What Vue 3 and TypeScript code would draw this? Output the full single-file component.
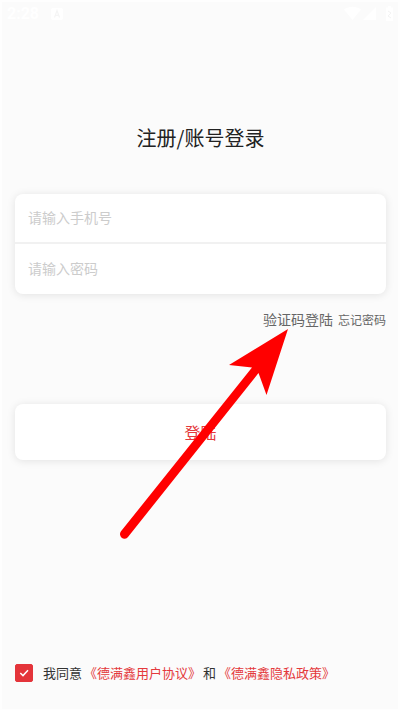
<script setup lang="ts">
import { ref } from 'vue'

const phone = ref<string>('')
const password = ref<string>('')
const agreed = ref<boolean>(true)
</script>

<template>
  <div class="page">
    <header class="status">
      <span class="time">2:28</span>
      <svg class="app-icon" viewBox="0 0 12 12" aria-hidden="true">
        <rect width="12" height="12" rx="2" fill="#fff" />
        <path d="M3.5 9.5 6 2.5l2.500 7M4.400 7.300h3.200" fill="none" stroke="#f5f5f5" stroke-width="1.200" />
      </svg>
      <svg class="signals" viewBox="0 0 50 18" aria-hidden="true">
        <path d="M0 4.500C5 .9 12 .9 17 4.500L8.500 15z" fill="#fff" />
        <path d="M32 2v13H19z" fill="#fff" />
        <path d="M42 2.500h2V1h3v1.500h2V16h-7z" fill="#fff" />
        <path d="M44 6l3 2-3 3 3 2" fill="none" stroke="#f3f3f3" />
      </svg>
    </header>

    <form class="login" @submit.prevent>
      <h1 class="title">注册/账号登录</h1>
      <div class="card fields">
        <input v-model="phone" class="field" type="tel" placeholder="请输入手机号" aria-label="手机号" />
        <input v-model="password" class="field" type="password" placeholder="请输入密码" aria-label="密码" />
      </div>
      <nav class="links">
        <a class="code-link" href="#code">验证码登陆</a>
        <a class="forgot-link" href="#forgot">忘记密码</a>
      </nav>
      <button class="card submit" type="submit">登陆</button>
    </form>

    <footer class="agreement">
      <span class="check-box">
        <input id="agree" v-model="agreed" class="check" type="checkbox" />
        <svg v-if="agreed" class="tick" viewBox="0 0 18 18" aria-hidden="true">
          <path d="M5.300 9 8 11.600 13 6.300" fill="none" stroke="#fff" stroke-width="1.500" />
        </svg>
      </span>
      <label for="agree">我同意</label>
      <a href="#terms">《德满鑫用户协议》</a>
      <span>和</span>
      <a href="#privacy">《德满鑫隐私政策》</a>
    </footer>

    <svg class="arrow" viewBox="0 0 170 220" aria-hidden="true">
      <path
        d="M168 9 109 45l23 2.500L1 211.300a4.500 4.500 0 0 0 7 5.700L138.500 53l8 22z"
        fill="#f00"
      />
    </svg>
  </div>
</template>

<style>
body {
  margin: 0;
  background: #fbfbfb;
}
</style>

<style scoped>
.page {
  position: relative;
  box-sizing: border-box;
  display: flex;
  flex-direction: column;
  min-height: 100vh;
  padding: 0 12px 24px 13px;
  border: 2px solid #fefefe;
  border-bottom-width: 1px;
  background: #fbfbfb;
  color: #333;
  font-family: "Noto Sans CJK SC", sans-serif;
  overflow: hidden;
}

.page::after {
  content: "";
  position: absolute;
  left: -2px;
  bottom: -1px;
  width: 2px;
  height: 2px;
  background: linear-gradient(45deg, #555 50%, transparent 50%);
}

.status {
  display: flex;
  align-items: center;
  height: 24px;
  margin: 0 -8px;
  color: #fff;
}

.time {
  font: 700 16px/24px Roboto, sans-serif;
}

.app-icon {
  width: 12px;
  height: 12px;
  margin-left: 12px;
}

.signals {
  width: 50px;
  height: 18px;
  margin-left: auto;
}

.login {
  display: flex;
  flex-direction: column;
}

.title {
  margin: 96px 0 40px;
  font-size: 20px;
  font-weight: 400;
  line-height: 32px;
  text-align: center;
  color: #222;
}

.card {
  border: 0;
  border-radius: 8px;
  background: #fff;
  box-shadow: 0 1px 8px rgba(0, 0, 0, 0.1);
}

.fields {
  display: flex;
  flex-direction: column;
  overflow: hidden;
}

.field {
  box-sizing: border-box;
  width: 100%;
  height: 50px;
  padding: 0 13px 2px;
  border: 0;
  outline: 0;
  background: transparent;
  color: #333;
  font-family: inherit;
  font-size: 14px;
}

.field:first-child {
  border-bottom: 2px solid #f1f1f1;
}

.field::placeholder {
  color: #ccc;
  opacity: 1;
}

.links {
  display: flex;
  justify-content: flex-end;
  align-items: center;
  gap: 5px;
  height: 24px;
  margin-top: 13px;
}

a {
  text-decoration: none;
}

.code-link {
  color: #666;
  font-size: 14px;
}

.forgot-link {
  color: #666;
  font-size: 12px;
}

.submit {
  height: 56px;
  margin-top: 73px;
  padding: 0;
  color: #e4393c;
  font-family: inherit;
  font-size: 16px;
}

.agreement {
  display: flex;
  align-items: center;
  gap: 2px;
  margin-top: auto;
  font-size: 13px;
  line-height: 24px;
  white-space: nowrap;
}

.agreement a {
  color: #e4393c;
}

.check-box {
  display: grid;
  width: 18px;
  height: 18px;
  margin-right: 8px;
}

.check,
.tick {
  grid-area: 1 / 1;
  width: 18px;
  height: 18px;
}

.check {
  appearance: none;
  margin: 0;
  border: 1px solid #e4343a;
  border-radius: 2px;
  background: #fff;
}

.check:checked {
  background: #e4343a;
}

.tick {
  pointer-events: none;
}

.arrow {
  position: absolute;
  left: 118px;
  top: 318px;
  width: 170px;
  height: 220px;
  pointer-events: none;
}
</style>
